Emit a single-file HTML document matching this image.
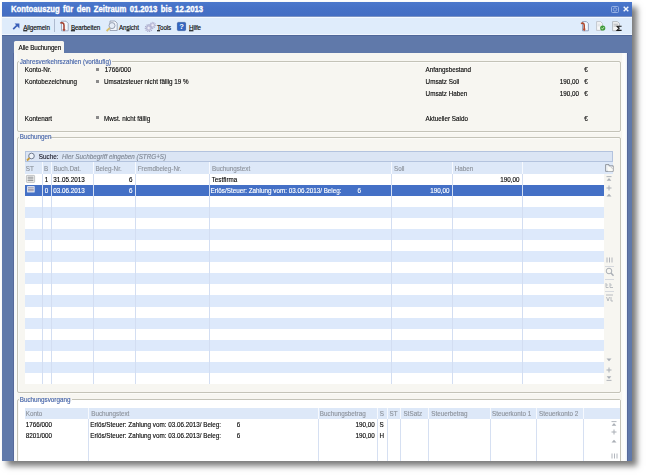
<!DOCTYPE html>
<html><head><meta charset="utf-8"><style>
*{box-sizing:border-box}
html,body{margin:0;padding:0}
body{width:646px;height:475px;background:#fff;position:relative;overflow:hidden;font-family:"Liberation Sans",sans-serif;font-size:6.3px;color:#0a0a0a}
.a{position:absolute}
.t{position:absolute;white-space:nowrap;line-height:8px;transform:scaleY(1.1);transform-origin:0 50%;-webkit-text-stroke:0.13px currentColor}
.t b,.b{font-weight:bold;-webkit-text-stroke:0}
u{text-decoration-thickness:0.5px;text-underline-offset:0.2px}
.tb{letter-spacing:-0.12px}
svg{position:absolute;overflow:visible}
</style></head><body>
<div class="a" style="left:2.00px;top:2.00px;width:630.00px;height:459.00px;background:#6079aa;box-shadow:5px 5px 6px rgba(0,0,0,.52)"></div>
<div class="a" style="left:0;top:0;width:646px;height:461px;overflow:hidden;filter:blur(0.3px)">
<div class="a" style="left:2.00px;top:2.00px;width:630.00px;height:15.00px;background:linear-gradient(180deg,#4b78cc,#4671c6 40%,#446ec3)"></div>
<div class="a" style="left:2.00px;top:16.00px;width:630.00px;height:1.00px;background:#7b93c4"></div>
<div class="t" style="left:11px;top:4.2px;font-size:8.9px;line-height:10px;font-weight:bold;color:#fff;word-spacing:1.5px;-webkit-text-stroke:0.35px #fff;transform:scaleX(0.865);transform-origin:0 0">Kontoauszug für den Zeitraum 01.2013 bis 12.2013</div>
<svg style="left:611px;top:5.5px" width="8" height="7"><rect x="0.5" y="0.5" width="7" height="6" rx="1" fill="none" stroke="#9fb8e6" stroke-width="0.9"/><circle cx="4" cy="3.5" r="1.7" fill="none" stroke="#9fb8e6" stroke-width="0.8"/></svg>
<svg style="left:622.5px;top:6.3px" width="6" height="6"><path d="M0.7 0.7 L5.3 5.3 M5.3 0.7 L0.7 5.3" stroke="#f4f7fc" stroke-width="1.4"/></svg>
<div class="a" style="left:2.00px;top:17.00px;width:630.00px;height:18.00px;background:#dfecfb;border-top:1px solid #f4f9ff"></div>
<div class="a" style="left:2.00px;top:34.00px;width:630.00px;height:1.00px;background:#f0f6fe"></div>
<svg style="left:12px;top:23px" width="8" height="7"><path d="M1.2 6.2 L5 2.4" stroke="#3a5fb8" stroke-width="1.7"/><path d="M2.6 0.6 H7.4 V5.4 Z" fill="#3a5fb8"/></svg>
<div class="t tb" style="left:23.20px;top:23.70px;font-size:6.3px;"><u>A</u>llgemein</div>
<div class="a" style="left:54.00px;top:19.00px;width:1.00px;height:13.00px;background:#aebbd0"></div>
<svg style="left:58px;top:20px" width="11" height="12"><path d="M3.5 1.2 H8 L10.2 3.4 V10.8 H3.5 Z" fill="#f4f7fc" stroke="#8e9bb5" stroke-width="0.8"/><path d="M2.2 3.2 C4 2.2,6 3,6 5.2 V10" stroke="#a33d2c" stroke-width="1.5" fill="none"/><path d="M4.4 9.2 L6 11.5 L7.6 9.2 Z" fill="#a33d2c"/></svg>
<div class="t tb" style="left:70.90px;top:23.70px;font-size:6.3px;"><u>B</u>earbeiten</div>
<svg style="left:105px;top:20px" width="13" height="12"><path d="M5 1 H10 L12.2 3.2 V10.5 H5 Z" fill="#f2f5fa" stroke="#8c96aa" stroke-width="0.8"/><circle cx="7" cy="5.6" r="3" fill="#e6edf7" stroke="#8d97ab" stroke-width="0.9"/><path d="M4.8 7.8 L1.6 11" stroke="#d9bf6a" stroke-width="1.8"/></svg>
<div class="t tb" style="left:119.00px;top:23.70px;font-size:6.3px;">An<u>s</u>icht</div>
<svg style="left:144.5px;top:21.5px" width="11" height="10"><circle cx="3.8" cy="6" r="3.4" fill="none" stroke="#a7a6c8" stroke-width="1.3" stroke-dasharray="1.1 0.8"/><circle cx="3.8" cy="6" r="2.4" fill="#cfcfe6" stroke="#9e9dc0" stroke-width="0.6"/><circle cx="3.8" cy="6" r="0.9" fill="#f1f1f8"/><circle cx="7.6" cy="3.2" r="2.8" fill="none" stroke="#b3b2d2" stroke-width="1.1" stroke-dasharray="1 0.7"/><circle cx="7.6" cy="3.2" r="2" fill="#d8d8ec" stroke="#a6a5c6" stroke-width="0.6"/><circle cx="7.6" cy="3.2" r="0.8" fill="#f3f3fa"/></svg>
<div class="t tb" style="left:157.00px;top:23.70px;font-size:6.3px;"><u>T</u>ools</div>
<svg style="left:177px;top:22px" width="9" height="9"><rect x="0.4" y="0.4" width="8.2" height="8.2" rx="1" fill="#3366c2" stroke="#224a94" stroke-width="0.6"/><text x="4.5" y="7.4" font-family="Liberation Sans" font-weight="bold" font-size="7.6" fill="#fff" text-anchor="middle">?</text></svg>
<div class="t tb" style="left:189.00px;top:23.70px;font-size:6.3px;"><u>H</u>ilfe</div>
<svg style="left:580px;top:21px" width="9" height="11"><path d="M2.5 0.6 H6.4 L8.4 2.6 V9.8 H2.5 Z" fill="#f3f7fd" stroke="#7f8fb0" stroke-width="0.8"/><path d="M1 2.6 C2.5 1.6,4.2 2.2,4.2 4.2 V8.6" stroke="#b04a30" stroke-width="1.6" fill="none"/><path d="M2.6 7.8 L4.2 10.2 L5.8 7.8 Z" fill="#b8482c"/></svg>
<svg style="left:596px;top:21px" width="10" height="10"><path d="M0.6 0.6 H4.6 L6.4 2.4 V9.4 H0.6 Z" fill="#f6f7f8" stroke="#b0b5bd" stroke-width="0.7"/><path d="M1.6 3.2 H4.6 M1.6 4.8 H4.6" stroke="#c8ccd2" stroke-width="0.6"/><circle cx="6.7" cy="7" r="2.6" fill="#3f9a3a"/><path d="M5.4 7.1 L6.4 8 L8 6.1" stroke="#d8f0d0" stroke-width="0.9" fill="none"/></svg>
<svg style="left:612px;top:21px" width="11" height="11"><path d="M0.6 0.6 H5.4 L7.4 2.6 V9.8 H0.6 Z" fill="#f4f4f4" stroke="#9ea3ab" stroke-width="0.7"/><path d="M1.6 3.2 H6 M1.6 5 H4" stroke="#8a8e96" stroke-width="0.6"/><path d="M9.6 5.2 H5 L7 7.3 L5 9.4 H9.6" stroke="#1a1a1a" stroke-width="1.1" fill="none"/></svg>
<div class="a" style="left:2.00px;top:35.00px;width:630.00px;height:1.00px;background:#4f6799"></div>
<div class="a" style="left:13.60px;top:41.40px;width:50.80px;height:12.10px;background:#f7f6f1;border-radius:1.5px 1.5px 0 0"></div>
<div class="t" style="left:18.60px;top:44.40px;font-size:6.3px;letter-spacing:-0.12px">Alle Buchungen</div>
<div class="a" style="left:14.00px;top:53.00px;width:613.00px;height:408.00px;background:#f7f6f1"></div>
<div class="a" style="left:621.80px;top:53.00px;width:5.20px;height:408.00px;background:linear-gradient(90deg,#fbfbf8,#fefefd 60%,#e6eef8)"></div>
<div class="a" style="left:14.00px;top:53.00px;width:3.00px;height:408.00px;background:linear-gradient(90deg,#f3f6fa,#fbfbf9)"></div>
<div class="a" style="left:627.00px;top:53.00px;width:1.00px;height:408.00px;background:#56699a"></div>
<div class="a" style="left:13.00px;top:53.00px;width:1.00px;height:408.00px;background:#56699a"></div>
<div class="a" style="left:17.30px;top:61.40px;width:603.90px;height:70.40px;border:1px solid #c4c3b8;border-radius:2px;box-shadow:inset 0.5px 0.5px 0 #fff,0.5px 0.5px 0 #fff"></div>
<div class="a" style="left:18.80px;top:58.40px;width:93.50px;height:6.00px;background:#f7f6f1"></div>
<div class="t" style="left:19.70px;top:57.90px;font-size:6.3px;color:#4564aa">Jahresverkehrszahlen (vorläufig)</div>
<div class="t" style="left:24.80px;top:66.30px;font-size:6.3px;">Konto-Nr.</div>
<div class="a" style="left:96.00px;top:68.00px;width:3.00px;height:3.00px;background:#8a8a8a"></div>
<div class="t" style="left:104.80px;top:66.30px;font-size:6.3px;">1766/000</div>
<div class="t" style="left:24.80px;top:78.15px;font-size:6.3px;">Kontobezeichnung</div>
<div class="a" style="left:96.00px;top:80.00px;width:3.00px;height:3.00px;background:#8a8a8a"></div>
<div class="t" style="left:104.00px;top:78.15px;font-size:6.3px;">Umsatzsteuer nicht fällig 19 %</div>
<div class="t" style="left:24.80px;top:114.70px;font-size:6.3px;">Kontenart</div>
<div class="a" style="left:96.00px;top:116.00px;width:3.00px;height:3.00px;background:#8a8a8a"></div>
<div class="t" style="left:104.00px;top:114.70px;font-size:6.3px;">Mwst. nicht fällig</div>
<div class="t" style="left:425.60px;top:66.10px;font-size:6.3px;">Anfangsbestand</div>
<div class="t" style="left:584.20px;top:66.10px;font-size:6.3px;">€</div>
<div class="t" style="left:425.60px;top:78.15px;font-size:6.3px;">Umsatz Soll</div>
<div class="t" style="right:67.00px;top:78.15px;font-size:6.3px;">190,00</div>
<div class="t" style="left:584.20px;top:78.15px;font-size:6.3px;">€</div>
<div class="t" style="left:425.60px;top:90.30px;font-size:6.3px;">Umsatz Haben</div>
<div class="t" style="right:67.00px;top:90.30px;font-size:6.3px;">190,00</div>
<div class="t" style="left:584.20px;top:90.30px;font-size:6.3px;">€</div>
<div class="t" style="left:425.60px;top:114.60px;font-size:6.3px;">Aktueller Saldo</div>
<div class="t" style="left:584.20px;top:114.60px;font-size:6.3px;">€</div>
<div class="a" style="left:17.30px;top:136.80px;width:603.90px;height:255.80px;border:1px solid #c4c3b8;border-radius:2px;box-shadow:inset 0.5px 0.5px 0 #fff,0.5px 0.5px 0 #fff"></div>
<div class="a" style="left:18.80px;top:133.80px;width:31.50px;height:6.00px;background:#f7f6f1"></div>
<div class="t" style="left:19.70px;top:133.30px;font-size:6.3px;color:#4564aa">Buchungen</div>
<div class="a" style="left:24.50px;top:151.00px;width:588.50px;height:10.50px;background:#dbe5f4;border:1px solid #b3c3de"></div>
<svg style="left:26px;top:152px" width="10" height="9"><circle cx="5.5" cy="4" r="2.8" fill="#eef3fa" stroke="#6f7b90" stroke-width="1"/><path d="M3.5 6 L1 8.5" stroke="#c89a3a" stroke-width="1.8"/></svg>
<div class="t" style="left:38.80px;top:152.70px;font-size:6.3px;color:#1a1a2a;-webkit-text-stroke:0.13px #1a1a2a">Suche:</div>
<div class="t" style="left:62.00px;top:152.70px;font-size:6.3px;font-style:italic;color:#7f8794">Hier Suchbegriff eingeben (STRG+S)</div>
<div class="a" style="left:24.50px;top:161.50px;width:588.50px;height:12.00px;background:#dde8f8"></div>
<div class="a" style="left:24.50px;top:173.60px;width:579.70px;height:11.08px;background:#fff"></div>
<div class="a" style="left:24.50px;top:184.68px;width:579.70px;height:11.08px;background:#4470c6"></div>
<div class="a" style="left:24.50px;top:195.76px;width:579.70px;height:11.08px;background:#fff"></div>
<div class="a" style="left:24.50px;top:206.84px;width:579.70px;height:11.08px;background:#dde9fb"></div>
<div class="a" style="left:24.50px;top:217.92px;width:579.70px;height:11.08px;background:#fff"></div>
<div class="a" style="left:24.50px;top:229.00px;width:579.70px;height:11.08px;background:#dde9fb"></div>
<div class="a" style="left:24.50px;top:240.08px;width:579.70px;height:11.08px;background:#fff"></div>
<div class="a" style="left:24.50px;top:251.16px;width:579.70px;height:11.08px;background:#dde9fb"></div>
<div class="a" style="left:24.50px;top:262.24px;width:579.70px;height:11.08px;background:#fff"></div>
<div class="a" style="left:24.50px;top:273.32px;width:579.70px;height:11.08px;background:#dde9fb"></div>
<div class="a" style="left:24.50px;top:284.40px;width:579.70px;height:11.08px;background:#fff"></div>
<div class="a" style="left:24.50px;top:295.48px;width:579.70px;height:11.08px;background:#dde9fb"></div>
<div class="a" style="left:24.50px;top:306.56px;width:579.70px;height:11.08px;background:#fff"></div>
<div class="a" style="left:24.50px;top:317.64px;width:579.70px;height:11.08px;background:#dde9fb"></div>
<div class="a" style="left:24.50px;top:328.72px;width:579.70px;height:11.08px;background:#fff"></div>
<div class="a" style="left:24.50px;top:339.80px;width:579.70px;height:11.08px;background:#dde9fb"></div>
<div class="a" style="left:24.50px;top:350.88px;width:579.70px;height:11.08px;background:#fff"></div>
<div class="a" style="left:24.50px;top:361.96px;width:579.70px;height:11.08px;background:#dde9fb"></div>
<div class="a" style="left:24.50px;top:373.04px;width:579.70px;height:11.08px;background:#fff"></div>
<div class="a" style="left:41.70px;top:161.50px;width:1.00px;height:12.00px;background:#f6f9fe"></div>
<div class="a" style="left:41.70px;top:173.50px;width:1.00px;height:210.70px;background:#d3def2"></div>
<div class="a" style="left:51.40px;top:161.50px;width:1.00px;height:12.00px;background:#f6f9fe"></div>
<div class="a" style="left:51.40px;top:173.50px;width:1.00px;height:210.70px;background:#d3def2"></div>
<div class="a" style="left:93.00px;top:161.50px;width:1.00px;height:12.00px;background:#f6f9fe"></div>
<div class="a" style="left:93.00px;top:173.50px;width:1.00px;height:210.70px;background:#d3def2"></div>
<div class="a" style="left:135.00px;top:161.50px;width:1.00px;height:12.00px;background:#f6f9fe"></div>
<div class="a" style="left:135.00px;top:173.50px;width:1.00px;height:210.70px;background:#d3def2"></div>
<div class="a" style="left:209.30px;top:161.50px;width:1.00px;height:12.00px;background:#f6f9fe"></div>
<div class="a" style="left:209.30px;top:173.50px;width:1.00px;height:210.70px;background:#d3def2"></div>
<div class="a" style="left:391.40px;top:161.50px;width:1.00px;height:12.00px;background:#f6f9fe"></div>
<div class="a" style="left:391.40px;top:173.50px;width:1.00px;height:210.70px;background:#d3def2"></div>
<div class="a" style="left:452.30px;top:161.50px;width:1.00px;height:12.00px;background:#f6f9fe"></div>
<div class="a" style="left:452.30px;top:173.50px;width:1.00px;height:210.70px;background:#d3def2"></div>
<div class="a" style="left:522.00px;top:161.50px;width:1.00px;height:12.00px;background:#f6f9fe"></div>
<div class="a" style="left:522.00px;top:173.50px;width:1.00px;height:210.70px;background:#d3def2"></div>
<div class="t" style="left:25.80px;top:165.20px;font-size:6.3px;color:#8d939c">ST</div>
<div class="t" style="left:44.00px;top:165.20px;font-size:6.3px;color:#8d939c">B</div>
<div class="t" style="left:53.40px;top:165.20px;font-size:6.3px;color:#8d939c">Buch.Dat.</div>
<div class="t" style="left:95.40px;top:165.20px;font-size:6.3px;color:#8d939c">Beleg-Nr.</div>
<div class="t" style="left:137.70px;top:165.20px;font-size:6.3px;color:#8d939c">Fremdbeleg-Nr.</div>
<div class="t" style="left:212.00px;top:165.20px;font-size:6.3px;color:#8d939c">Buchungstext</div>
<div class="t" style="left:394.00px;top:165.20px;font-size:6.3px;color:#8d939c">Soll</div>
<div class="t" style="left:454.80px;top:165.20px;font-size:6.3px;color:#8d939c">Haben</div>
<svg style="left:26px;top:175.2px" width="9" height="8"><rect x="0.4" y="0.4" width="8.2" height="7" rx="0.6" fill="#f4f4f2" stroke="#b4b6b8" stroke-width="0.8"/><path d="M1.6 2.2 H7.4 M1.6 3.9 H7.4 M1.6 5.6 H7.4" stroke="#6f7378" stroke-width="0.75"/></svg>
<div class="t" style="left:44.70px;top:176.14px;font-size:6.3px;color:#000;-webkit-text-stroke:0.11px #000">1</div>
<div class="t" style="left:53.20px;top:176.14px;font-size:6.3px;color:#000;-webkit-text-stroke:0.11px #000">31.05.2013</div>
<div class="t" style="right:513.50px;top:176.14px;font-size:6.3px;color:#000;-webkit-text-stroke:0.11px #000">6</div>
<div class="t" style="left:211.70px;top:176.14px;font-size:6.3px;color:#000;-webkit-text-stroke:0.11px #000">Testfirma</div>
<div class="t" style="right:126.50px;top:176.14px;font-size:6.3px;">190,00</div>
<svg style="left:26.7px;top:186.2px" width="8" height="7"><rect x="0.2" y="0.2" width="7.4" height="6.2" fill="#f6f8fc"/><path d="M1 1.8 H6.8 M1 3.3 H6.8 M1 4.8 H6.8" stroke="#6e6a86" stroke-width="0.75"/></svg>
<div class="t" style="left:44.70px;top:187.22px;font-size:6.3px;color:#fff">0</div>
<div class="t" style="left:53.20px;top:187.22px;font-size:6.3px;color:#fff">03.06.2013</div>
<div class="t" style="right:513.50px;top:187.22px;font-size:6.3px;color:#fff">6</div>
<div class="t" style="left:210.60px;top:187.22px;font-size:6.3px;color:#fff">Erlös/Steuer: Zahlung vom: 03.06.2013/ Beleg:</div>
<div class="t" style="left:357.50px;top:187.22px;font-size:6.3px;color:#fff">6</div>
<div class="t" style="right:196.40px;top:187.22px;font-size:6.3px;color:#fff">190,00</div>
<svg style="left:604.5px;top:164.2px" width="9" height="8"><path d="M0.6 0.6 H4 V1.8 H8.2 V7.4 H0.6 Z" fill="#eef1f5" stroke="#7d838c" stroke-width="0.8"/><path d="M3 3 H7.6 V7.2 H3 Z" fill="#fbfbf6"/><path d="M5.6 3 L7.6 4.6" stroke="#9aa0a8" stroke-width="0.6"/></svg>
<svg style="left:606px;top:175.5px" width="6" height="6"><path d="M0.5 0.6 H5.5" stroke="#a9aeb5" stroke-width="0.9"/><path d="M0.7 4.8 L3 2 L5.3 4.8 Z" fill="#a9aeb5"/></svg>
<svg style="left:606px;top:184.5px" width="6" height="6"><path d="M0.5 3 H5.5 M3 0.5 V5.5" stroke="#a9aeb5" stroke-width="1"/></svg>
<svg style="left:606px;top:192px" width="6" height="6"><path d="M0.5 4.5 L3 1.8 L5.5 4.5 Z" fill="#a9aeb5"/></svg>
<svg style="left:606.0px;top:256.5px" width="7" height="6"><path d="M1 0.5 V5.5 M3.5 0.5 V5.5 M6 0.5 V5.5" stroke="#a9aeb5" stroke-width="0.9"/></svg>
<div class="a" style="left:605.00px;top:265.50px;width:8.50px;height:0.80px;background:#d6d9de"></div>
<svg style="left:605px;top:267px" width="9" height="10"><circle cx="4" cy="4" r="2.8" fill="none" stroke="#a9aeb5" stroke-width="1"/><path d="M6 6 L8.5 8.8" stroke="#a9aeb5" stroke-width="1.4"/></svg>
<div class="a" style="left:605.00px;top:278.50px;width:8.50px;height:0.80px;background:#d6d9de"></div>
<svg style="left:605px;top:282px" width="9" height="7"><path d="M1 1 V5.5 H3.5 M5 1 V5.5 H8" stroke="#a9aeb5" stroke-width="0.8" fill="none"/><path d="M1 3 H3 M5 3 H7" stroke="#a9aeb5" stroke-width="0.6"/></svg>
<div class="a" style="left:605.00px;top:290.80px;width:8.50px;height:0.80px;background:#d6d9de"></div>
<svg style="left:605px;top:294px" width="9" height="8"><path d="M1 1 H8" stroke="#a9aeb5" stroke-width="0.8"/><path d="M1.5 3 L3 7 L4.5 3 M6 3 V7 H8" stroke="#a9aeb5" stroke-width="0.8" fill="none"/></svg>
<svg style="left:606px;top:357.4px" width="6" height="6"><path d="M0.5 1.5 L3 4.2 L5.5 1.5 Z" fill="#a9aeb5"/></svg>
<svg style="left:606px;top:366.6px" width="6" height="6"><path d="M0.5 3 H5.5 M3 0.5 V5.5" stroke="#a9aeb5" stroke-width="1"/></svg>
<svg style="left:606px;top:374.8px" width="6" height="6"><path d="M0.7 1.2 L3 4 L5.3 1.2 Z" fill="#a9aeb5"/><path d="M0.5 5.4 H5.5" stroke="#a9aeb5" stroke-width="0.9"/></svg>
<div class="a" style="left:17.30px;top:399.20px;width:603.90px;height:70.80px;border:1px solid #c4c3b8;border-radius:2px;box-shadow:inset 0.5px 0.5px 0 #fff,0.5px 0.5px 0 #fff"></div>
<div class="a" style="left:18.80px;top:396.20px;width:51.50px;height:6.00px;background:#f7f6f1"></div>
<div class="t" style="left:19.70px;top:395.70px;font-size:6.3px;color:#4564aa">Buchungsvorgang</div>
<div class="a" style="left:18.50px;top:400.00px;width:601.50px;height:61.00px;background:#fff;border-radius:0"></div>
<div class="a" style="left:19.30px;top:396.00px;width:52.70px;height:4.50px;background:#f7f6f1"></div>
<div class="t" style="left:19.70px;top:395.70px;font-size:6.3px;color:#4564aa">Buchungsvorgang</div>
<div class="a" style="left:24.50px;top:408.30px;width:595.50px;height:10.40px;background:#dde8f8"></div>
<div class="a" style="left:88.00px;top:408.30px;width:1.00px;height:10.40px;background:#f6f9fe"></div>
<div class="a" style="left:88.00px;top:418.70px;width:1.00px;height:42.30px;background:#d6e0f2"></div>
<div class="a" style="left:317.80px;top:408.30px;width:1.00px;height:10.40px;background:#f6f9fe"></div>
<div class="a" style="left:317.80px;top:418.70px;width:1.00px;height:42.30px;background:#d6e0f2"></div>
<div class="a" style="left:377.20px;top:408.30px;width:1.00px;height:10.40px;background:#f6f9fe"></div>
<div class="a" style="left:377.20px;top:418.70px;width:1.00px;height:42.30px;background:#d6e0f2"></div>
<div class="a" style="left:386.60px;top:408.30px;width:1.00px;height:10.40px;background:#f6f9fe"></div>
<div class="a" style="left:386.60px;top:418.70px;width:1.00px;height:42.30px;background:#d6e0f2"></div>
<div class="a" style="left:400.20px;top:408.30px;width:1.00px;height:10.40px;background:#f6f9fe"></div>
<div class="a" style="left:400.20px;top:418.70px;width:1.00px;height:42.30px;background:#d6e0f2"></div>
<div class="a" style="left:428.20px;top:408.30px;width:1.00px;height:10.40px;background:#f6f9fe"></div>
<div class="a" style="left:428.20px;top:418.70px;width:1.00px;height:42.30px;background:#d6e0f2"></div>
<div class="a" style="left:489.50px;top:408.30px;width:1.00px;height:10.40px;background:#f6f9fe"></div>
<div class="a" style="left:489.50px;top:418.70px;width:1.00px;height:42.30px;background:#d6e0f2"></div>
<div class="a" style="left:536.30px;top:408.30px;width:1.00px;height:10.40px;background:#f6f9fe"></div>
<div class="a" style="left:536.30px;top:418.70px;width:1.00px;height:42.30px;background:#d6e0f2"></div>
<div class="a" style="left:582.90px;top:408.30px;width:1.00px;height:10.40px;background:#f6f9fe"></div>
<div class="a" style="left:582.90px;top:418.70px;width:1.00px;height:42.30px;background:#d6e0f2"></div>
<div class="t" style="left:25.80px;top:409.90px;font-size:6.3px;color:#8d939c">Konto</div>
<div class="t" style="left:91.20px;top:409.90px;font-size:6.3px;color:#8d939c">Buchungstext</div>
<div class="t" style="left:319.80px;top:409.90px;font-size:6.3px;color:#8d939c">Buchungsbetrag</div>
<div class="t" style="left:379.70px;top:409.90px;font-size:6.3px;color:#8d939c">S</div>
<div class="t" style="left:389.60px;top:409.90px;font-size:6.3px;color:#8d939c">ST</div>
<div class="t" style="left:403.50px;top:409.90px;font-size:6.3px;color:#8d939c">StSatz</div>
<div class="t" style="left:431.20px;top:409.90px;font-size:6.3px;color:#8d939c">Steuerbetrag</div>
<div class="t" style="left:492.00px;top:409.90px;font-size:6.3px;color:#8d939c">Steuerkonto 1</div>
<div class="t" style="left:539.00px;top:409.90px;font-size:6.3px;color:#8d939c">Steuerkonto 2</div>
<div class="t" style="left:25.80px;top:421.30px;font-size:6.3px;">1766/000</div>
<div class="t" style="left:90.20px;top:421.30px;font-size:6.3px;">Erlös/Steuer: Zahlung vom: 03.06.2013/ Beleg:</div>
<div class="t" style="left:236.80px;top:421.30px;font-size:6.3px;">6</div>
<div class="t" style="right:271.20px;top:421.30px;font-size:6.3px;">190,00</div>
<div class="t" style="left:379.50px;top:421.30px;font-size:6.3px;">S</div>
<div class="t" style="left:25.80px;top:431.80px;font-size:6.3px;">8201/000</div>
<div class="t" style="left:90.20px;top:431.80px;font-size:6.3px;">Erlös/Steuer: Zahlung vom: 03.06.2013/ Beleg:</div>
<div class="t" style="left:236.80px;top:431.80px;font-size:6.3px;">6</div>
<div class="t" style="right:271.20px;top:431.80px;font-size:6.3px;">190,00</div>
<div class="t" style="left:379.50px;top:431.80px;font-size:6.3px;">H</div>
<svg style="left:611px;top:420.7px" width="6" height="6"><path d="M0.5 0.6 H5.5" stroke="#a9aeb5" stroke-width="0.9"/><path d="M0.7 4.8 L3 2 L5.3 4.8 Z" fill="#a9aeb5"/></svg>
<svg style="left:611px;top:429.4px" width="6" height="6"><path d="M0.5 3 H5.5 M3 0.5 V5.5" stroke="#a9aeb5" stroke-width="1"/></svg>
<svg style="left:611px;top:438.3px" width="6" height="6"><path d="M0.5 4.5 L3 1.8 L5.5 4.5 Z" fill="#a9aeb5"/></svg>
<svg style="left:610.5px;top:452.8px" width="7" height="6"><path d="M1 0.5 V5.5 M3.5 0.5 V5.5 M6 0.5 V5.5" stroke="#a9aeb5" stroke-width="0.9"/></svg>
</div>
</body></html>
